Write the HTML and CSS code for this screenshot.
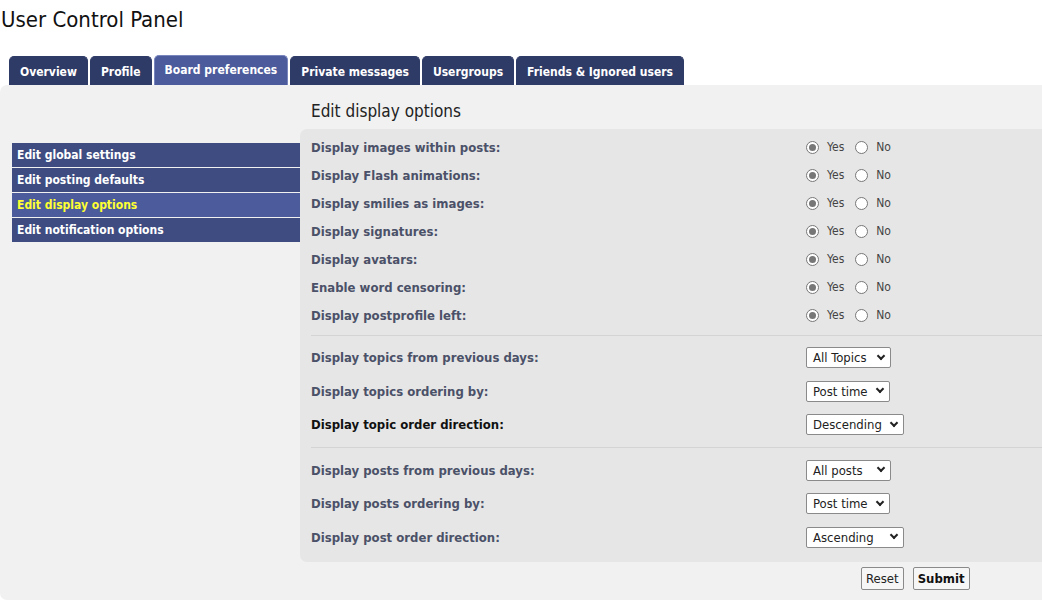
FILE: index.html
```html
<!DOCTYPE html>
<html>
<head>
<meta charset="utf-8">
<link rel="stylesheet" href="styles.css">
</head>
<body>
<h1 class="title">User Control Panel</h1>
<nav class="tabs">
  <a class="tab">Overview</a>
  <a class="tab">Profile</a>
  <a class="tab active">Board preferences</a>
  <a class="tab">Private messages</a>
  <a class="tab">Usergroups</a>
  <a class="tab">Friends &amp; Ignored users</a>
</nav>
<div class="panel">
  <ul class="menu">
    <li class="item">Edit global settings</li>
    <li class="item">Edit posting defaults</li>
    <li class="item active">Edit display options</li>
    <li class="item">Edit notification options</li>
  </ul>
  <div class="main">
    <h2 class="heading">Edit display options</h2>
    <div class="box">
      <div class="group">
        <div class="row"><span class="label">Display images within posts:</span><span class="opts"><span class="radio on"></span><span class="rt">Yes</span><span class="radio"></span><span class="rt">No</span></span></div>
        <div class="row"><span class="label">Display Flash animations:</span><span class="opts"><span class="radio on"></span><span class="rt">Yes</span><span class="radio"></span><span class="rt">No</span></span></div>
        <div class="row"><span class="label">Display smilies as images:</span><span class="opts"><span class="radio on"></span><span class="rt">Yes</span><span class="radio"></span><span class="rt">No</span></span></div>
        <div class="row"><span class="label">Display signatures:</span><span class="opts"><span class="radio on"></span><span class="rt">Yes</span><span class="radio"></span><span class="rt">No</span></span></div>
        <div class="row"><span class="label">Display avatars:</span><span class="opts"><span class="radio on"></span><span class="rt">Yes</span><span class="radio"></span><span class="rt">No</span></span></div>
        <div class="row"><span class="label">Enable word censoring:</span><span class="opts"><span class="radio on"></span><span class="rt">Yes</span><span class="radio"></span><span class="rt">No</span></span></div>
        <div class="row"><span class="label">Display postprofile left:</span><span class="opts"><span class="radio on"></span><span class="rt">Yes</span><span class="radio"></span><span class="rt">No</span></span></div>
      </div>
      <div class="group sel">
        <div class="srow"><span class="label">Display topics from previous days:</span><span class="opts"><span class="select w84">All Topics<i class="chev"></i></span></span></div>
        <div class="srow"><span class="label">Display topics ordering by:</span><span class="opts"><span class="select w83">Post time<i class="chev"></i></span></span></div>
        <div class="srow"><span class="label dark">Display topic order direction:</span><span class="opts"><span class="select w97">Descending<i class="chev"></i></span></span></div>
      </div>
      <div class="group sel last">
        <div class="srow"><span class="label">Display posts from previous days:</span><span class="opts"><span class="select w84">All posts<i class="chev"></i></span></span></div>
        <div class="srow"><span class="label">Display posts ordering by:</span><span class="opts"><span class="select w83">Post time<i class="chev"></i></span></span></div>
        <div class="srow"><span class="label">Display post order direction:</span><span class="opts"><span class="select w97">Ascending<i class="chev"></i></span></span></div>
      </div>
    </div>
    <div class="actions">
      <span class="btn">Reset</span>
      <span class="btn bold">Submit</span>
    </div>
  </div>
</div>
</body>
</html>
```

FILE: styles.css
```css
* { box-sizing: border-box; }
html, body { margin: 0; padding: 0; background: #fff; }
body {
  font-family: Tahoma, "DejaVu Sans Condensed", "DejaVu Sans", sans-serif;
  color: #222;
  width: 1042px;
  height: 600px;
  overflow: hidden;
}
.title {
  margin: 0;
  padding: 7px 0 0 1px;
  font-size: 22px;
  font-weight: normal;
  line-height: 26px;
  height: 56px;
  color: #111;
}
.tabs {
  display: flex;
  align-items: flex-end;
  gap: 2px;
  padding-left: 9px;
  height: 29px;
}
.tab {
  display: block;
  height: 29px;
  padding: 8px 10px 0;
  background: #2f3b67;
  color: #fff;
  font-size: 12px;
  font-weight: bold;
  line-height: 14px;
  border-radius: 5px 5px 0 0;
  border: 1px solid #2f3b67;
  border-bottom: none;
}
.tab.active {
  background: #4b5b9b;
  border-color: #7986be;
  height: 30px;
  padding-top: 7px;
}
.panel {
  background: #f1f1f1;
  border-radius: 7px 0 0 7px;
  display: flex;
  height: 515px;
}
.menu {
  list-style: none;
  margin: 58px 0 0 12px;
  padding: 0;
  width: 288px;
}
.item {
  background: #3e4c81;
  color: #fff;
  font-size: 12px;
  font-weight: bold;
  height: 24px;
  line-height: 24px;
  padding-left: 5px;
  margin-bottom: 1px;
}
.item.active {
  background: #4b5b9b;
  color: #ffff33;
}
.main {
  flex: 1;
  display: flex;
  flex-direction: column;
}
.heading {
  margin: 0;
  font-size: 17px;
  font-weight: normal;
  color: #222;
  height: 44px;
  line-height: 20px;
  padding: 16px 0 0 11px;
}
.box {
  background: #e6e6e6;
  border-radius: 7px 0 0 7px;
  padding: 3px 0 0 11px;
  height: 433px;
}
.group {
  border-bottom: 1px solid #d4d4d4;
  padding-bottom: 6px;
}
.group.sel { padding-top: 5px; padding-bottom: 5px; }
.group.last { border-bottom: none; padding-top: 6px; }
.row, .srow {
  display: flex;
  align-items: center;
  height: 28px;
}
.row:first-child { margin-top: 1px; }
.srow { height: 33.5px; }
.label {
  width: 495px;
  font-size: 13px;
  font-weight: bold;
  color: #4b5168;
}
.label.dark { color: #111; }
.opts {
  display: flex;
  align-items: center;
  font-size: 12px;
  color: #444;
}
.radio {
  width: 13px;
  height: 13px;
  border: 1px solid #777;
  border-radius: 50%;
  background: #fff;
  position: relative;
  margin-right: 8px;
}
.radio.on::after {
  content: "";
  position: absolute;
  left: 2px; top: 2px;
  width: 7px; height: 7px;
  border-radius: 50%;
  background: #777;
}
.rt { margin-right: 11px; }
.select {
  display: flex;
  align-items: center;
  justify-content: space-between;
  height: 21px;
  background: #fff;
  border: 1px solid #8a8a8a;
  border-radius: 2px;
  padding: 0 6px 0 6px;
  font-size: 13px;
  color: #222;
}
.w84 { width: 85px; }
.w83 { width: 84px; }
.w97 { width: 98px; }
.chev {
  width: 6px;
  height: 6px;
  border-right: 2px solid #222;
  border-bottom: 2px solid #222;
  transform: rotate(45deg);
  margin-top: -4px;
}
.actions {
  display: flex;
  justify-content: flex-start;
  gap: 9px;
  padding: 5px 0 0 561px;
}
.btn {
  display: block;
  height: 23px;
  line-height: 21px;
  font-size: 13px;
  border: 1px solid #8a8a8a;
  border-radius: 2px;
  padding: 0 4px;
  background: #f6f6f6;
  color: #222;
}
.btn.bold { font-weight: bold; color: #111; }
```
